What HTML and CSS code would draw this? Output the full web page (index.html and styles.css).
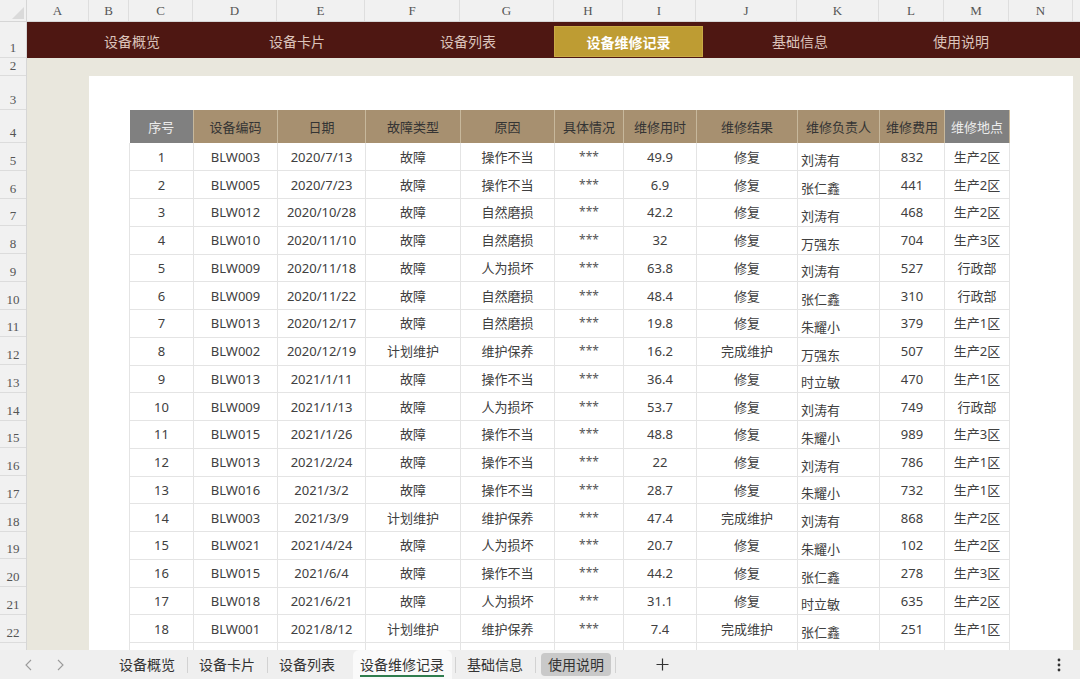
FILE: index.html
```html
<!DOCTYPE html>
<html lang="zh-CN">
<head>
    <meta charset="UTF-8">
    <title>设备维修记录</title>
    <link rel="stylesheet" href="styles.css">
</head>
<body>

<div class="sheet">
    <!-- column letters -->
    <div class="colhead">
        <div class="corner"><span class="corner-tri"></span></div>
        <div class="col w-a">A</div>
        <div class="col w-b">B</div>
        <div class="col w-c">C</div>
        <div class="col w-d">D</div>
        <div class="col w-e">E</div>
        <div class="col w-f">F</div>
        <div class="col w-g">G</div>
        <div class="col w-h">H</div>
        <div class="col w-i">I</div>
        <div class="col w-j">J</div>
        <div class="col w-k">K</div>
        <div class="col w-l">L</div>
        <div class="col w-m">M</div>
        <div class="col w-n">N</div>
        <div class="col w-rest"></div>
    </div>

    <div class="main">
        <!-- row numbers -->
        <div class="rowhead">
            <div class="rn h-1">1</div>
            <div class="rn h-2">2</div>
            <div class="rn h-3">3</div>
            <div class="rn h-4">4</div>
            <div class="rn">5</div>
            <div class="rn">6</div>
            <div class="rn">7</div>
            <div class="rn">8</div>
            <div class="rn">9</div>
            <div class="rn">10</div>
            <div class="rn">11</div>
            <div class="rn">12</div>
            <div class="rn">13</div>
            <div class="rn">14</div>
            <div class="rn">15</div>
            <div class="rn">16</div>
            <div class="rn">17</div>
            <div class="rn">18</div>
            <div class="rn">19</div>
            <div class="rn">20</div>
            <div class="rn">21</div>
            <div class="rn">22</div>
            <div class="rn"></div>
        </div>

        <div class="canvas">
            <div class="topnav">
                <div class="nav-item n1">设备概览</div>
                <div class="nav-item n2">设备卡片</div>
                <div class="nav-item n3">设备列表</div>
                <div class="nav-item nav-active">设备维修记录</div>
                <div class="nav-item n5">基础信息</div>
                <div class="nav-item n6">使用说明</div>
            </div>
            <div class="gap-row"></div>
            <div class="panel">
                <table class="records">
                    <colgroup>
                        <col style="width:64px"><col style="width:84px"><col style="width:88px">
                        <col style="width:95px"><col style="width:94px"><col style="width:69px">
                        <col style="width:73px"><col style="width:101px"><col style="width:82px">
                        <col style="width:65px"><col style="width:65px">
                    </colgroup>
                    <thead>
                        <tr>
                            <th class="th-gray">序号</th>
                            <th>设备编码</th>
                            <th>日期</th>
                            <th>故障类型</th>
                            <th>原因</th>
                            <th>具体情况</th>
                            <th>维修用时</th>
                            <th>维修结果</th>
                            <th>维修负责人</th>
                            <th>维修费用</th>
                            <th class="th-gray">维修地点</th>
                        </tr>
                    </thead>
                    <tbody id="rows"></tbody>
                </table>
            </div>
        </div>
    </div>

    <!-- sheet tabs -->
    <div class="tabbar">
        <div class="tab-nav">
            <svg width="10" height="12" viewBox="0 0 10 12"><path d="M7 1 L2 6 L7 11" fill="none" stroke="#9a9a9a" stroke-width="1.1"/></svg>
            <svg width="10" height="12" viewBox="0 0 10 12"><path d="M3 1 L8 6 L3 11" fill="none" stroke="#9a9a9a" stroke-width="1.1"/></svg>
        </div>
        <div class="tab">设备概览</div>
        <span class="tab-sep"></span>
        <div class="tab">设备卡片</div>
        <span class="tab-sep"></span>
        <div class="tab">设备列表</div>
        <div class="tab tab-active"><span>设备维修记录</span></div>
        <span class="tab-sep"></span>
        <div class="tab">基础信息</div>
        <span class="tab-sep"></span>
        <div class="tab tab-pill">使用说明</div>
        <span class="tab-sep"></span>
        <div class="tab-add">
            <svg width="13" height="13" viewBox="0 0 13 13"><path d="M6.5 0.5 V12.5 M0.5 6.5 H12.5" stroke="#333" stroke-width="1.2"/></svg>
        </div>
        <div class="tab-more">
            <svg width="4" height="14" viewBox="0 0 4 14"><circle cx="2" cy="2" r="1.4" fill="#333"/><circle cx="2" cy="7" r="1.4" fill="#333"/><circle cx="2" cy="12" r="1.4" fill="#333"/></svg>
        </div>
    </div>
</div>

<script>
    const records = [
        [1, 'BLW003', '2020/7/13', '故障', '操作不当', 49.9, '修复', '刘涛有', 832, '生产2区'],
        [2, 'BLW005', '2020/7/23', '故障', '操作不当', 6.9, '修复', '张仁鑫', 441, '生产2区'],
        [3, 'BLW012', '2020/10/28', '故障', '自然磨损', 42.2, '修复', '刘涛有', 468, '生产2区'],
        [4, 'BLW010', '2020/11/10', '故障', '自然磨损', 32, '修复', '万强东', 704, '生产3区'],
        [5, 'BLW009', '2020/11/18', '故障', '人为损坏', 63.8, '修复', '刘涛有', 527, '行政部'],
        [6, 'BLW009', '2020/11/22', '故障', '自然磨损', 48.4, '修复', '张仁鑫', 310, '行政部'],
        [7, 'BLW013', '2020/12/17', '故障', '自然磨损', 19.8, '修复', '朱耀小', 379, '生产1区'],
        [8, 'BLW002', '2020/12/19', '计划维护', '维护保养', 16.2, '完成维护', '万强东', 507, '生产2区'],
        [9, 'BLW013', '2021/1/11', '故障', '操作不当', 36.4, '修复', '时立敏', 470, '生产1区'],
        [10, 'BLW009', '2021/1/13', '故障', '人为损坏', 53.7, '修复', '刘涛有', 749, '行政部'],
        [11, 'BLW015', '2021/1/26', '故障', '操作不当', 48.8, '修复', '朱耀小', 989, '生产3区'],
        [12, 'BLW013', '2021/2/24', '故障', '操作不当', 22, '修复', '刘涛有', 786, '生产1区'],
        [13, 'BLW016', '2021/3/2', '故障', '操作不当', 28.7, '修复', '朱耀小', 732, '生产1区'],
        [14, 'BLW003', '2021/3/9', '计划维护', '维护保养', 47.4, '完成维护', '刘涛有', 868, '生产2区'],
        [15, 'BLW021', '2021/4/24', '故障', '人为损坏', 20.7, '修复', '朱耀小', 102, '生产2区'],
        [16, 'BLW015', '2021/6/4', '故障', '操作不当', 44.2, '修复', '张仁鑫', 278, '生产3区'],
        [17, 'BLW018', '2021/6/21', '故障', '人为损坏', 31.1, '修复', '时立敏', 635, '生产2区'],
        [18, 'BLW001', '2021/8/12', '计划维护', '维护保养', 7.4, '完成维护', '张仁鑫', 251, '生产1区']
    ];

    const tbody = document.getElementById('rows');
    let html = '';
    records.forEach(r => {
        html += '<tr>' +
            `<td>${r[0]}</td><td>${r[1]}</td><td>${r[2]}</td><td>${r[3]}</td><td>${r[4]}</td>` +
            `<td class="stars">***</td><td>${r[5]}</td><td>${r[6]}</td>` +
            `<td class="person">${r[7]}</td><td>${r[8]}</td><td>${r[9]}</td>` +
            '</tr>';
    });
    // empty rows below, cut off by the tab bar
    for (let i = 0; i < 2; i++) {
        html += '<tr>' + '<td></td>'.repeat(11) + '</tr>';
    }
    tbody.innerHTML = html;
</script>

</body>
</html>
```

FILE: styles.css
```css
/* spreadsheet-like page */
html, body {
    margin: 0;
    padding: 0;
    height: 100%;
    overflow: hidden;
}
body {
    font-family: "Noto Sans", "Noto Sans CJK SC", sans-serif;
    color: #404040;
    background: #e9e7dd;
}
.sheet {
    display: flex;
    flex-direction: column;
    width: 1080px;
    height: 679px;
}

/* column header */
.colhead {
    display: flex;
    height: 22px;
    flex: none;
    background: #f1f1f1;
    border-bottom: 1px solid #d6d6d6;
    box-sizing: border-box;
}
.corner {
    width: 27px;
    position: relative;
    border-right: 1px solid #d6d6d6;
    box-sizing: border-box;
}
.corner-tri {
    position: absolute;
    right: 2px;
    bottom: 2px;
    width: 0;
    height: 0;
    border-left: 12px solid transparent;
    border-bottom: 12px solid #dadada;
}
.col {
    box-sizing: border-box;
    border-right: 1px solid #dedede;
    font-family: "Liberation Serif", "DejaVu Serif", serif;
    font-size: 13px;
    color: #555;
    text-align: center;
    line-height: 22px;
}
.w-a { width: 62px; }
.w-b { width: 40px; }
.w-c { width: 64px; }
.w-d { width: 84px; }
.w-e { width: 88px; }
.w-f { width: 95px; }
.w-g { width: 94px; }
.w-h { width: 69px; }
.w-i { width: 73px; }
.w-j { width: 101px; }
.w-k { width: 82px; }
.w-l { width: 65px; }
.w-m { width: 65px; }
.w-n { width: 64px; }
.w-rest { flex: 1; border-right: none; }

/* body */
.main {
    display: flex;
    flex: 1;
    overflow: hidden;
}
.rowhead {
    width: 27px;
    flex: none;
    background: #f1f1f1;
    border-right: 1px solid #d6d6d6;
    box-sizing: border-box;
}
.rn {
    height: 27.75px;
    box-sizing: border-box;
    border-bottom: 1px solid #dcdcdc;
    display: flex;
    align-items: flex-end;
    justify-content: center;
    padding-bottom: 1px;
    font-family: "Liberation Serif", "DejaVu Serif", serif;
    font-size: 13px;
    line-height: 16px;
    color: #555;
}
.h-1 { height: 36px; }
.h-2 { height: 18px; }
.h-3 { height: 34px; }
.h-4 { height: 33px; }

.canvas {
    flex: 1;
    display: flex;
    flex-direction: column;
}

/* top navigation */
.topnav {
    height: 36px;
    flex: none;
    background: #4e1712;
    display: flex;
    align-items: center;
}
.nav-item {
    width: 100px;
    text-align: center;
    font-size: 14px;
    line-height: 18px;
    color: #dcc3bb;
    padding-top: 3px;
}
.n1 { margin-left: 55px; }
.n2 { margin-left: 65px; }
.n3 { margin-left: 71px; }
.n5 { margin-left: 47px; }
.n6 { margin-left: 61px; }
.nav-active {
    margin-left: 36px;
    width: 149px;
    height: 31px;
    margin-top: 2px;
    padding-top: 0;
    box-sizing: border-box;
    background: #be9c33;
    border: 1px solid #c9aa45;
    color: #fff;
    font-weight: bold;
    line-height: 31px;
}

.gap-row {
    height: 18px;
    flex: none;
}
.panel {
    flex: 1;
    width: 984px;
    margin-left: 62px;
    background: #fff;
    padding: 34px 0 0 40px;
    box-sizing: border-box;
}

/* records table */
.records {
    border-collapse: collapse;
    table-layout: fixed;
    width: 880px;
    font-size: 13px;
}
.records th {
    height: 33px;
    padding: 0;
    background: #a79070;
    color: #343434;
    font-weight: normal;
    line-height: 16px;
    border-right: 1px solid #c7b89c;
}
.records th.th-gray {
    background: #808080;
    color: #ececec;
}
.records td {
    height: 27.75px;
    padding: 0;
    text-align: center;
    line-height: 16px;
    border: 1px solid #e4e4e4;
    border-top: none;
    box-sizing: border-box;
    white-space: nowrap;
}
.records td.stars {
    font-size: 12px;
    color: #555;
}
.records td.person {
    text-align: left;
    vertical-align: bottom;
    padding: 0 0 2px 3px;
}

/* sheet tabs */
.tabbar {
    height: 29px;
    flex: none;
    background: #efefef;
    display: flex;
    align-items: center;
    font-size: 14px;
    color: #333;
}
.tab-nav {
    width: 107px;
    display: flex;
    gap: 21px;
    padding-left: 24px;
    box-sizing: border-box;
}
.tab {
    padding: 0 12px 0 12px;
    line-height: 20px;
}
.tab + .tab-sep + .tab {
    padding-left: 11px;
}
.tab-sep {
    width: 1px;
    height: 16px;
    background: #d2d2d2;
}
.tab-active {
    align-self: stretch;
    display: flex;
    align-items: center;
    margin: 0 3px 0 6px;
    padding: 0 8px 0 7px;
    background: #fafafa;
    border-radius: 6px 6px 0 0;
}
.tab-active span {
    border-bottom: 2px solid #2f7d4e;
    padding-top: 2px;
}
.tab + .tab-sep + .tab-pill {
    margin: 0 4px 0 5px;
    padding: 0 7px;
    height: 23px;
    line-height: 23px;
    background: #c9c9c9;
    border-radius: 4px;
}
.tab-add {
    margin-left: 40px;
    display: flex;
}
.tab-more {
    margin-left: auto;
    margin-right: 19px;
    display: flex;
}
```
